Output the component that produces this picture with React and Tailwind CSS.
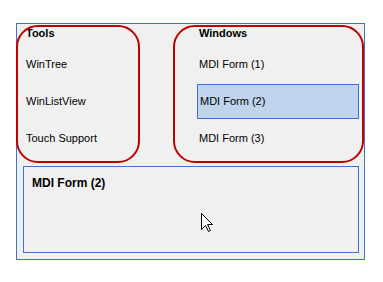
const Cursor = () => (
  <svg width="13" height="20" viewBox="0 0 13 20" className="absolute left-[177px] top-[46px]">
    <path d="M0.5 0.5 L0.5 16.5 L4.5 12.5 L7.5 18.5 L9.5 17.5 L6.5 11.5 L11.5 11.5 Z" fill="#ffffff" stroke="#000000" strokeWidth="1" strokeLinejoin="miter" />
  </svg>
)

const items = [
  { left: "WinTree", right: "MDI Form (1)" },
  { left: "WinListView", right: "MDI Form (2)", selected: true },
  { left: "Touch Support", right: "MDI Form (3)" },
]

export default function App() {
  return (
    <div className="w-[383px] h-[282px] bg-white pt-[23px] pl-[16px]" style={{ fontFamily: '"Liberation Sans", Arial, sans-serif' }}>
      <div className="relative w-[349px] h-[237px] border border-[#3b74cf] bg-[#f0f0f0] text-black text-[11px] leading-[13px]">
        {/* top section: two columns */}
        <div className="flex h-[132px]">
          <div className="w-[180px] pl-[9px]">
            <div className="h-[21px] pt-[3px] font-bold">Tools</div>
            {items.map((it) => (
              <div key={it.left} className="h-[37px] pt-[2px] flex items-center">{it.left}</div>
            ))}
          </div>
          <div className="w-[162px]">
            <div className="h-[21px] pt-[3px] pl-[2px] font-bold">Windows</div>
            {items.map((it) => (
              <div key={it.right} className="h-[37px] pt-[2px] flex items-center">
                {it.selected ? (
                  <div className="w-[162px] h-[35px] flex items-center pl-[2px] border border-[#3b74cf] bg-[#c1d4ee]">
                    {it.right}
                  </div>
                ) : (
                  <div className="pl-[2px]">{it.right}</div>
                )}
              </div>
            ))}
          </div>
        </div>

        {/* detail panel */}
        <div className="mt-[10px] ml-[6px] w-[336px] h-[87px] border border-[#3b74cf] pl-[8px] pt-[9px] relative">
          <div className="font-bold text-[12px] leading-[14px]">MDI Form (2)</div>
          <Cursor />
        </div>

        {/* red annotation outlines */}
        <div className="absolute left-[-1px] top-[1px] w-[124px] h-[138px] rounded-[22px] border-2 border-[#c00000] pointer-events-none" />
        <div className="absolute left-[156px] top-[1px] w-[191px] h-[138px] rounded-[22px] border-2 border-[#c00000] pointer-events-none" />
      </div>
    </div>
  )
}
